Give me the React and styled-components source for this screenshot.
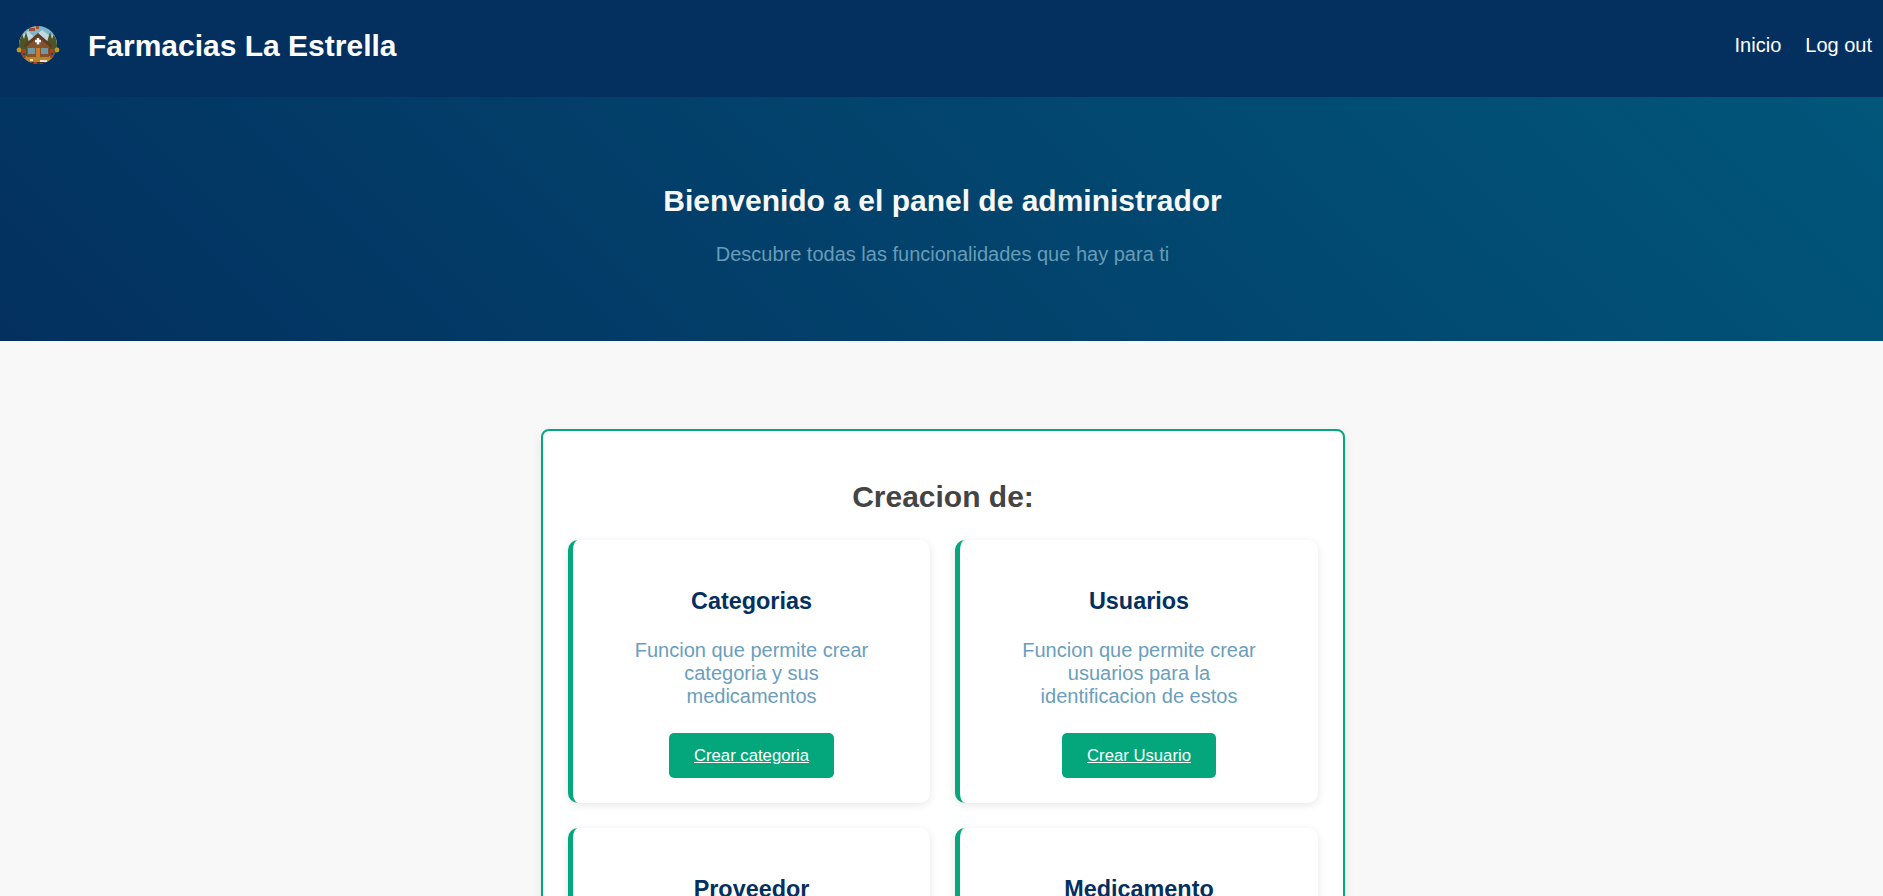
import React from "react";
import styled, { createGlobalStyle } from "styled-components";

const Global = createGlobalStyle`
  * { box-sizing: border-box; }
  html, body { margin: 0; padding: 0; }
  body { background: #f8f8f8; font-family: "Liberation Sans", Arial, sans-serif; color: #444; }
`;

const Header = styled.header`
  height: 97px;
  background: #03305f;
  display: flex;
  align-items: center;
  justify-content: space-between;
  padding: 0 11px 6px 16px;
`;
const Brand = styled.div`
  display: flex;
  align-items: center;
  gap: 28px;
`;
const BrandName = styled.span`
  font-size: 30px;
  font-weight: 700;
  color: #fff;
`;
const Nav = styled.nav`
  display: flex;
  gap: 24px;
`;
const NavLink = styled.a`
  color: #fff;
  font-size: 20px;
  text-decoration: none;
`;
const Hero = styled.section`
  height: 244px;
  background: linear-gradient(45deg, #03305f 0%, #01567a 100%);
  display: flex;
  flex-direction: column;
  align-items: center;
  padding: 87px 0 0 2px;
`;
const HeroTitle = styled.h1`
  margin: 0;
  font-size: 30px;
  line-height: 34px;
  font-weight: 700;
  color: #f8f8f8;
`;
const HeroSub = styled.p`
  margin: 25px 0 0;
  font-size: 20px;
  line-height: 23px;
  color: #669db8;
`;
const Main = styled.main`
  display: flex;
  justify-content: center;
  padding: 88px 0 40px 3px;
`;
const Panel = styled.section`
  width: 804px;
  background: #fff;
  border: 2px solid #04a77c;
  border-radius: 8px;
  padding: 49px 25px 25px;
  box-shadow: 0 4px 12px rgba(0, 0, 0, 0.08);
`;
const PanelTitle = styled.h2`
  margin: 0 0 26px;
  text-align: center;
  font-size: 30px;
  line-height: 34px;
  font-weight: 700;
  color: #444;
`;
const Grid = styled.div`
  display: grid;
  grid-template-columns: 362px 363px;
  gap: 25px;
`;
const Card = styled.article`
  height: 263px;
  background: #fff;
  border-left: 5px solid #04a77c;
  border-radius: 10px;
  box-shadow: 0 2px 8px rgba(0, 0, 0, 0.1);
  padding: 48px 25px 25px;
  display: flex;
  flex-direction: column;
  align-items: center;
  text-align: center;
`;
const CardTitle = styled.h3`
  margin: 0;
  font-size: 23.4px;
  line-height: 27px;
  font-weight: 700;
  color: #03305f;
`;
const CardText = styled.p`
  margin: 24px 0 0;
  width: 250px;
  font-size: 20px;
  line-height: 23px;
  color: #6a9ebc;
`;
const CardButton = styled.a`
  margin-top: 25px;
  display: inline-block;
  padding: 12px 25px;
  background: #04a77c;
  border-radius: 5px;
  color: #fff;
  font-size: 16.7px;
  line-height: 21px;
  text-decoration: underline;
`;

const Logo = () => (
  <svg width="44" height="44" viewBox="0 0 44 44" aria-hidden="true">
    <defs>
      <clipPath id="logo-disc">
        <circle cx="22" cy="21" r="19" />
      </clipPath>
    </defs>
    <g clipPath="url(#logo-disc)">
      <rect width="44" height="44" fill="#7fb6c9" />
      <path d="M3 14 L12 7 L18 13 L26 6 L34 12 L41 10 V20 H3Z" fill="#c2d8de" />
      <path d="M2 32 V14 L5 7 L8 15 L10 8 L13 18 V32Z" fill="#4d5526" />
      <path d="M42 32 V14 L39 7 L36 15 L34 8 L31 18 V32Z" fill="#4d5526" />
      <rect x="2" y="32" width="40" height="10" fill="#b8842a" />
      <rect x="8" y="38" width="28" height="5" fill="#43341f" />
      <path d="M11 20 L22 11 L33 20 V33 H11Z" fill="#86522c" />
      <path d="M7 22 L22 9 L37 22 L34 23 L22 13 L10 23Z" fill="#5f3a24" />
      <rect x="12" y="24" width="7" height="6" fill="#6f98a6" />
      <rect x="25" y="24" width="7" height="6" fill="#6f98a6" />
      <rect x="20" y="24" width="4" height="9" fill="#c67c2b" />
      <rect x="20.8" y="14" width="2.4" height="6.4" fill="#fff" />
      <rect x="19" y="15.9" width="6" height="2.4" fill="#fff" />
      <rect x="6" y="25" width="4" height="9" rx="1" fill="#a9412a" />
      <rect x="34" y="25" width="4" height="9" rx="1" fill="#a9412a" />
      <rect x="7" y="29" width="2" height="2" fill="#234a5e" />
      <rect x="35" y="29" width="2" height="2" fill="#234a5e" />
      <rect x="13" y="4" width="6" height="3" fill="#a0502f" />
      <rect x="20" y="2" width="3" height="3" fill="#a0502f" />
      <rect x="14" y="35" width="3" height="2" fill="#ead9b3" />
      <rect x="24" y="36" width="7" height="2" fill="#e9e4d5" />
      <rect x="18" y="38" width="3" height="2" fill="#b5452a" />
    </g>
    <circle cx="3" cy="26" r="2.4" fill="#c59628" />
    <circle cx="41" cy="26" r="2.4" fill="#c59628" />
  </svg>
);

const cards = [
  { title: "Categorias", text: "Funcion que permite crear categoria y sus medicamentos", action: "Crear categoria" },
  { title: "Usuarios", text: "Funcion que permite crear usuarios para la identificacion de estos", action: "Crear Usuario" },
  { title: "Proveedor", text: "Funcion que permite crear proveedores", action: "Crear Proveedor" },
  { title: "Medicamento", text: "Funcion que permite crear medicamentos", action: "Crear Medicamento" },
];

export default function App() {
  return (
    <>
      <Global />
      <Header>
        <Brand>
          <Logo />
          <BrandName>Farmacias La Estrella</BrandName>
        </Brand>
        <Nav>
          <NavLink href="#">Inicio</NavLink>
          <NavLink href="#">Log out</NavLink>
        </Nav>
      </Header>
      <Hero>
        <HeroTitle>Bienvenido a el panel de administrador</HeroTitle>
        <HeroSub>Descubre todas las funcionalidades que hay para ti</HeroSub>
      </Hero>
      <Main>
        <Panel>
          <PanelTitle>Creacion de:</PanelTitle>
          <Grid>
            {cards.map((c) => (
              <Card key={c.title}>
                <CardTitle>{c.title}</CardTitle>
                <CardText>{c.text}</CardText>
                <CardButton href="#">{c.action}</CardButton>
              </Card>
            ))}
          </Grid>
        </Panel>
      </Main>
    </>
  );
}
